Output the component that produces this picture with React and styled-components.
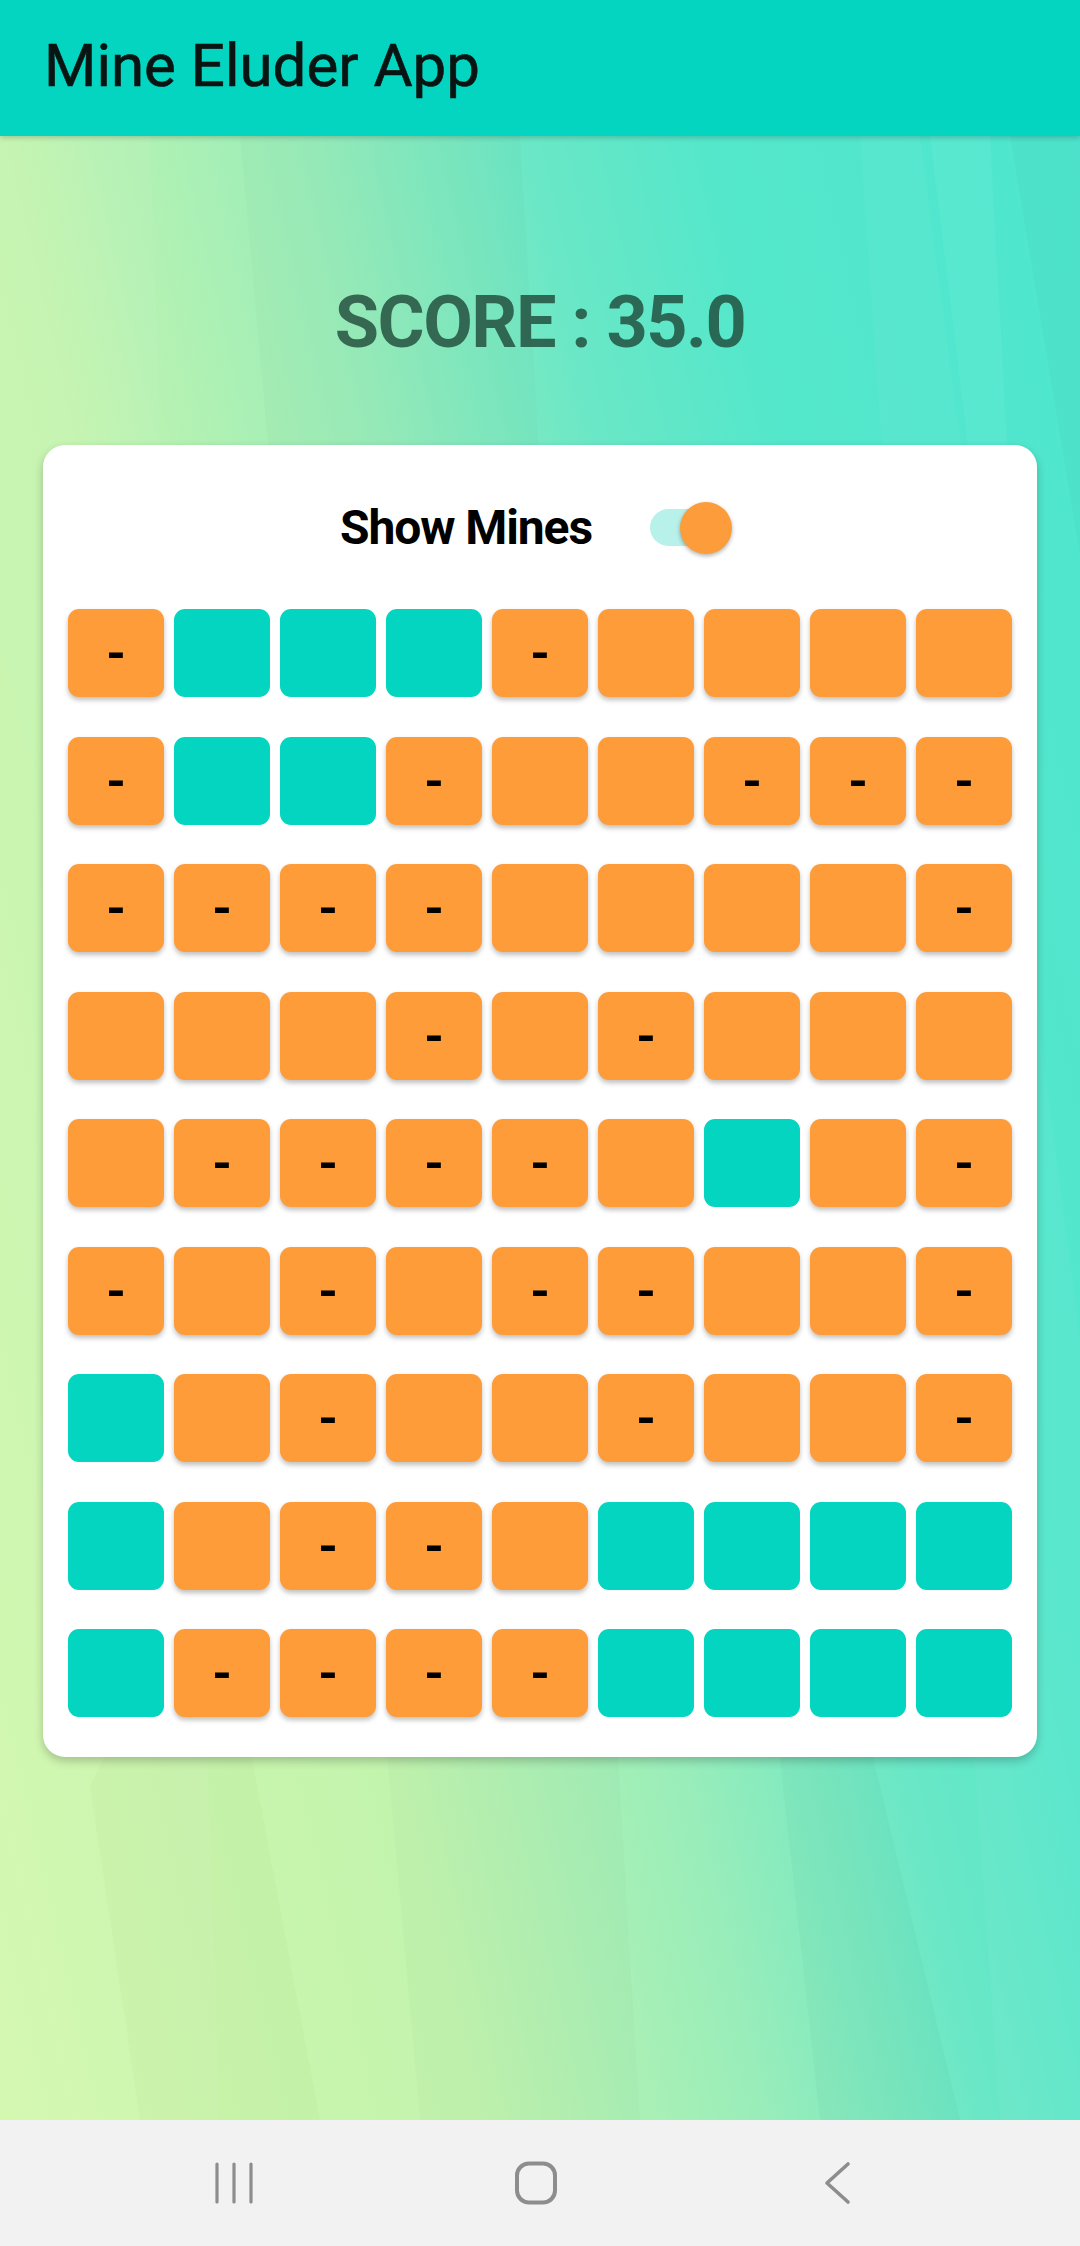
import React from "react";
import styled, { createGlobalStyle } from "styled-components";

const GlobalStyle = createGlobalStyle`
  html, body { margin: 0; padding: 0; }
  body { font-family: Roboto, "Noto Sans", "Liberation Sans", sans-serif; }
  * { box-sizing: border-box; }
`;

const Page = styled.div`
  width: 1080px;
  height: 2246px;
  display: flex;
  flex-direction: column;
  overflow: hidden;
`;

const AppBar = styled.header`
  height: 136px;
  flex: 0 0 auto;
  background: #03d5c1;
  display: flex;
  align-items: center;
  padding: 0 0 6px 44px;
  box-shadow: 0 2px 5px rgba(0, 0, 0, 0.18);
  position: relative;
  z-index: 2;
`;

const Title = styled.h1`
  margin: 0;
  font-family: Roboto, "Liberation Sans", sans-serif;
  font-weight: 400;
  font-size: 60px;
  color: #0a1412;
  -webkit-text-stroke: 0.6px #0a1412;
`;

const Main = styled.main`
  flex: 1 1 auto;
  position: relative;
  display: flex;
  flex-direction: column;
  align-items: center;
  background: linear-gradient(
    77deg,
    #d2f8ac 0%,
    #c3f4ae 30%,
    #98edba 50%,
    #6ae7c6 64%,
    #54e7cb 76%,
    #4ee6cf 100%
  );
`;

const Backdrop = styled.svg`
  position: absolute;
  inset: 0;
  width: 100%;
  height: 100%;
  pointer-events: none;
`;

const Content = styled.div`
  position: relative;
  display: flex;
  flex-direction: column;
  align-items: center;
  width: 100%;
`;

const Score = styled.div`
  margin-top: 145px;
  font-family: Roboto, "Liberation Sans", sans-serif;
  font-weight: 700;
  font-size: 72px;
  line-height: 84px;
  letter-spacing: -1.5px;
  color: rgba(28, 68, 52, 0.78);
`;

const Card = styled.section`
  margin-top: 80px;
  width: 994px;
  background: #fff;
  border-radius: 22px;
  padding: 55px 25px 40px;
  box-shadow: 0 4px 10px rgba(0, 0, 0, 0.22);
  display: flex;
  flex-direction: column;
  gap: 53px;
`;

const ToggleRow = styled.div`
  display: flex;
  align-items: center;
  justify-content: center;
  gap: 58px;
  height: 56px;
  padding-right: 8px;
`;

const ToggleLabel = styled.span`
  font-family: Roboto, "Liberation Sans", sans-serif;
  font-weight: 700;
  font-size: 48px;
  line-height: 56px;
  letter-spacing: -1.1px;
  color: #000;
`;

const Switch = styled.div`
  position: relative;
  width: 82px;
  height: 52px;
  flex: 0 0 auto;
`;

const Track = styled.div`
  position: absolute;
  left: 0;
  top: 7px;
  width: 72px;
  height: 37px;
  border-radius: 19px;
  background: #b8f1ea;
`;

const Thumb = styled.div`
  position: absolute;
  right: 0;
  top: 0;
  width: 52px;
  height: 52px;
  border-radius: 50%;
  background: #fd9c3a;
  box-shadow: 0 2px 4px rgba(0, 0, 0, 0.3);
`;

const Grid = styled.div`
  display: grid;
  grid-template-columns: repeat(9, 96px);
  grid-auto-rows: 88px;
  column-gap: 10px;
  row-gap: 39.5px;
`;

const Cell = styled.div`
  border-radius: 11px;
  display: flex;
  align-items: center;
  justify-content: center;
  background: ${(p) => (p.$open ? "#03d5c1" : "#fe9c3a")};
  box-shadow: ${(p) => (p.$open ? "none" : "0 3px 5px rgba(0, 0, 0, 0.25)")};
`;

const Dash = styled.span`
  font-family: Roboto, "Liberation Sans", sans-serif;
  font-weight: 700;
  font-size: 50px;
  line-height: 1;
  margin-top: 2px;
  color: #000;
`;

const NavBar = styled.nav`
  height: 126px;
  flex: 0 0 auto;
  background: #f2f2f2;
  display: flex;
  justify-content: center;
  align-items: center;
  padding-right: 8px;
`;

const NavSlot = styled.div`
  width: 302px;
  display: flex;
  justify-content: center;
  align-items: center;
`;

const board = [
  "-TTT-OOOO",
  "-TT-OO---",
  "----OOOO-",
  "OOO-O-OOO",
  "O----OTO-",
  "-O-O--OO-",
  "TO-OO-OO-",
  "TO--OTTTT",
  "T----TTTT",
];

const RecentsIcon = () => (
  <svg width="38" height="42" viewBox="0 0 38 42" fill="none">
    <g stroke="#8d8d8d" strokeWidth="3.2" strokeLinecap="round">
      <line x1="2" y1="2" x2="2" y2="40" />
      <line x1="19" y1="2" x2="19" y2="40" />
      <line x1="36" y1="2" x2="36" y2="40" />
    </g>
  </svg>
);

const HomeIcon = () => (
  <svg width="44" height="44" viewBox="0 0 44 44" fill="none">
    <rect x="3" y="2.5" width="38" height="39" rx="12" stroke="#8d8d8d" strokeWidth="4" />
  </svg>
);

const BackIcon = () => (
  <svg width="28" height="44" viewBox="0 0 28 44" fill="none">
    <polyline
      points="24,3 3,22 24,41"
      stroke="#8d8d8d"
      strokeWidth="3.6"
      strokeLinecap="round"
      strokeLinejoin="round"
    />
  </svg>
);

export default function App() {
  return (
    <Page>
      <GlobalStyle />
      <AppBar>
        <Title>Mine Eluder App</Title>
      </AppBar>
      <Main>
        <Backdrop viewBox="0 0 1080 1984" preserveAspectRatio="none">
          <polygon points="0,0 150,0 220,1984 0,1984" fill="rgba(255,255,255,0.05)" />
          <polygon points="90,1650 210,1400 320,1984 140,1984" fill="rgba(120,150,60,0.035)" />
          <polygon points="240,0 520,0 640,1984 420,1984" fill="rgba(0,0,0,0.015)" />
          <polygon points="860,0 920,0 1080,1200 1080,1984 1000,1984" fill="rgba(255,255,255,0.04)" />
          <polygon points="930,0 990,0 1040,900" fill="rgba(255,255,255,0.05)" />
          <polygon points="1080,0 1080,420 1010,0" fill="rgba(0,0,0,0.02)" />
          <polygon points="700,900 960,1984 820,1984" fill="rgba(0,80,60,0.03)" />
        </Backdrop>
        <Content>
          <Score>SCORE : 35.0</Score>
          <Card>
            <ToggleRow>
              <ToggleLabel>Show Mines</ToggleLabel>
              <Switch>
                <Track />
                <Thumb />
              </Switch>
            </ToggleRow>
            <Grid>
              {board.map((row, r) =>
                row.split("").map((c, i) => (
                  <Cell key={`${r}-${i}`} $open={c === "T"}>
                    {c === "-" && <Dash>-</Dash>}
                  </Cell>
                ))
              )}
            </Grid>
          </Card>
        </Content>
      </Main>
      <NavBar>
        <NavSlot>
          <RecentsIcon />
        </NavSlot>
        <NavSlot>
          <HomeIcon />
        </NavSlot>
        <NavSlot>
          <BackIcon />
        </NavSlot>
      </NavBar>
    </Page>
  );
}
